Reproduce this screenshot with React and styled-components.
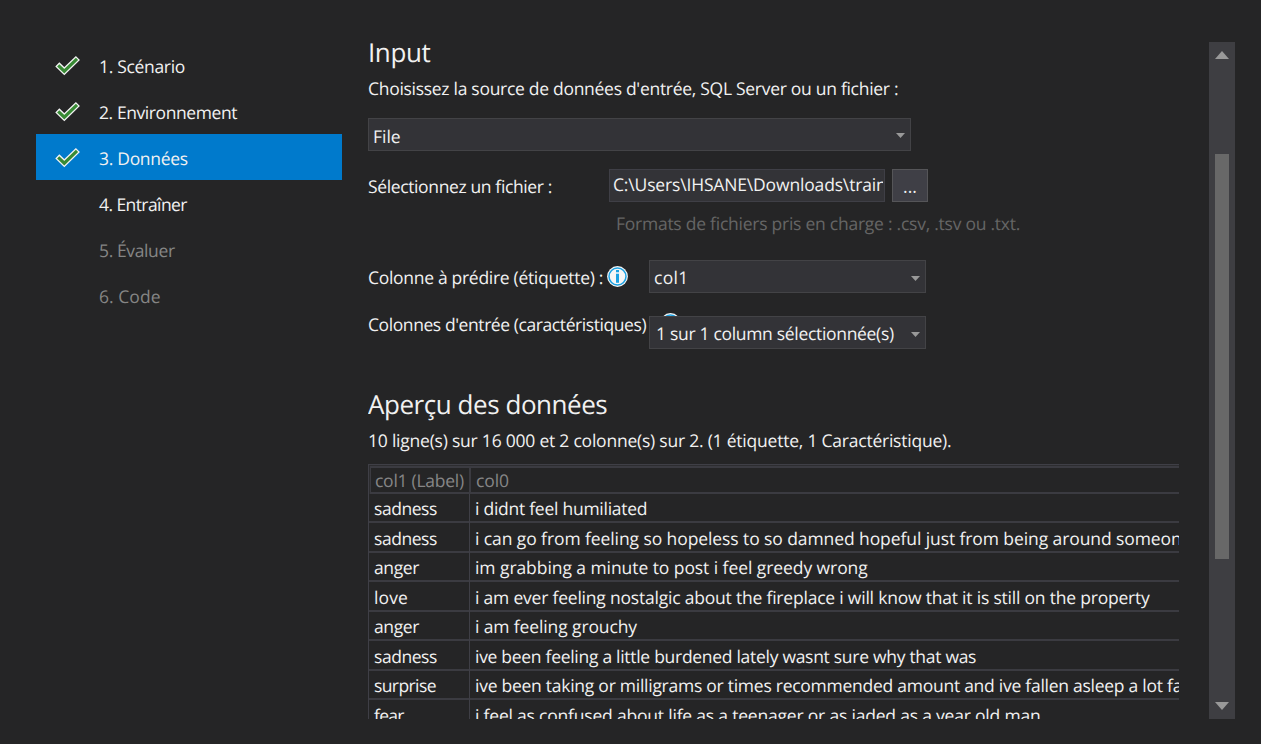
import React from "react";
import styled, { createGlobalStyle } from "styled-components";

const GlobalStyle = createGlobalStyle`
  * { box-sizing: border-box; }
  body {
    margin: 0;
    background: #252526;
    color: #f1f1f1;
    font-family: "Open Sans", "Noto Sans", sans-serif;
    font-size: 17.5px;
    text-rendering: geometricPrecision;
  }
`;

const Window = styled.div`
  display: flex;
  width: 1261px;
  height: 744px;
  padding: 34px 26px 25px 36px;
  overflow: hidden;
`;

const Steps = styled.nav`
  width: 306px;
  margin-top: 8px;
  flex: none;
`;

const Step = styled.div`
  display: flex;
  height: 46px;
  background: ${(p) => (p.$active ? "#007acc" : "transparent")};
  color: ${(p) => (p.$disabled ? "#858585" : "#f1f1f1")};
`;

const StepIcon = styled.span`
  width: 63px;
  padding: 13px 0 0 19px;
  line-height: 0;
`;

const Text = styled.span`
  white-space: pre;
  letter-spacing: ${(p) => p.$track || 0}px;
`;

const StepText = styled(Text)`
  line-height: 50px;
`;

const Content = styled.main`
  width: 811px;
  height: 685px;
  margin-left: 26px;
  overflow: hidden;
  flex: none;
`;

const Heading = styled.h2`
  margin: ${(p) => p.$top || 0}px 0 7px;
  font-size: 26px;
  font-weight: 400;
  line-height: 36px;
  letter-spacing: ${(p) => p.$track}px;
  white-space: pre;
`;

const Paragraph = styled.p`
  margin: 0;
  line-height: 24px;
  white-space: pre;
  letter-spacing: ${(p) => p.$track}px;
`;

const Hint = styled(Paragraph)`
  margin: 10px 0 24px 248px;
  color: #656565;
`;

const Select = styled.div`
  display: flex;
  position: relative;
  justify-content: space-between;
  align-items: center;
  width: ${(p) => p.$width}px;
  height: 33px;
  padding: ${(p) => p.$drop || 2}px 5px 0 ${(p) => p.$indent || 4}px;
  border: 1px solid #434346;
  background: #333337;
`;

const SourceSelect = styled(Select)`
  margin: 17px 0 18px;
`;

const SourceText = styled.span`
  padding-top: 2px;
`;

const FieldRow = styled.div`
  position: relative;
  display: grid;
  grid-template-columns: ${(p) => p.$label}px auto auto;
  justify-content: start;
  height: 33px;
  margin-bottom: ${(p) => p.$gap || 0}px;
`;

const FieldLabel = styled.label`
  display: flex;
  line-height: ${(p) => p.$line || 37}px;
`;

const TextBox = styled.div`
  width: 276px;
  height: 33px;
  padding: 0 1px 0 3px;
  border: 1px solid #3f3f46;
  background: #333337;
  line-height: 30px;
`;

const TextBoxValue = styled(Text)`
  display: block;
  overflow: hidden;
`;

const BrowseButton = styled.button`
  width: 36px;
  height: 33px;
  margin-left: 7px;
  padding: 0;
  border: 1px solid #555558;
  background: #3f3f46;
  color: #f1f1f1;
  font: inherit;
  line-height: 33px;
`;

const InfoSlot = styled.span`
  margin: 6px 0 0 4px;
  line-height: 0;
`;

const CoveredInfo = styled.span`
  position: absolute;
  left: 292px;
  top: -3px;
  line-height: 0;
`;

const Table = styled.div`
  width: 1400px;
  margin-top: 11px;
  border-top: 1px solid #3f3f46;
  border-left: 1px solid #3f3f46;
`;

const HeaderRow = styled.div`
  display: grid;
  grid-template-columns: 99px 1fr;
  height: 29px;
  padding: 1px 0 0 1px;
  background: #2d2d30;
  color: #868686;
`;

const HeaderCell = styled.div`
  height: 28px;
  padding-left: ${(p) => p.$indent}px;
  border: solid #3b3b41;
  border-width: 2px 0 2px ${(p) => p.$left}px;
  background: #252526;
  line-height: 26px;
`;

const Row = styled.div`
  display: grid;
  grid-template-columns: 101px 1fr;
  height: ${(p) => (p.$tall ? 30 : 29)}px;
  line-height: ${(p) => (p.$tall ? 32 : 31)}px;
  border-bottom: 2px solid #3b3b41;
`;

const Cell = styled.div`
  height: 100%;
  padding-left: 5px;
  border-right: 1px solid #3f3f46;
  white-space: pre;
`;

const ScrollBar = styled.div`
  display: flex;
  flex-direction: column;
  align-items: center;
  width: 26px;
  height: 677px;
  margin: 8px 0 0 30px;
  padding: 9px 0;
  background: #3e3e42;
  flex: none;
`;

const Thumb = styled.div`
  width: 14px;
  height: 405px;
  margin: 95px 0 143px;
  background: #686868;
`;

const Check = () => (
  <svg width="26" height="22" viewBox="0 0 26 22" fill="none">
    <path d="M2.3 9.4 9.3 16.2 22.9 3" stroke="#f3f3f3" strokeWidth="5.8" />
    <path d="M3.2 10.3 9.3 16.2 22 3.9" stroke="#388a34" strokeWidth="3.2" />
  </svg>
);

const Info = () => (
  <svg width="21" height="21" viewBox="0 0 21 21">
    <circle cx="10.5" cy="10.5" r="10.4" fill="#f6f6f6" />
    <circle cx="10.5" cy="10.5" r="8.5" fill="none" stroke="#1ba1e2" strokeWidth="1.5" />
    <path d="M9 4h3v2.3H9zM9 7.7h3v9H9z" fill="#1ba1e2" />
  </svg>
);

const Caret = () => (
  <svg width="9" height="5" viewBox="0 0 9 5">
    <path d="M0 0h9L4.5 5z" fill="#999" />
  </svg>
);

const ScrollArrow = ({ up }) => (
  <svg width="14" height="8" viewBox="0 0 14 8">
    <path d={up ? "M0 8h14L7 0z" : "M0 0h14L7 8z"} fill="#999" />
  </svg>
);

const steps = [
  { text: "1. Scénario", track: -0.32, done: true },
  { text: "2. Environnement", track: -0.42, done: true },
  { text: "3. Données", track: -0.3, done: true, active: true },
  { text: "4. Entraîner", track: -0.58 },
  { text: "5. Évaluer", track: -0.38, disabled: true },
  { text: "6. Code", track: 0.05, disabled: true },
];

const rows = [
  ["sadness", -0.45, "i didnt feel humiliated", -0.26],
  ["sadness", -0.45, "i can go from feeling so hopeless to so damned hopeful just from being around someone", -0.09],
  ["anger", -0.4, "im grabbing a minute to post i feel greedy wrong", -0.07],
  ["love", 0.1, "i am ever feeling nostalgic about the fireplace i will know that it is still on the property", -0.207],
  ["anger", -0.4, "i am feeling grouchy", -0.12],
  ["sadness", -0.45, "ive been feeling a little burdened lately wasnt sure why that was", -0.29],
  ["surprise", -0.6, "ive been taking or milligrams or times recommended amount and ive fallen asleep a lot faster", -0.26],
  ["fear", -0.7, "i feel as confused about life as a teenager or as jaded as a year old man", -0.2],
];

export default function App() {
  return (
    <Window>
      <GlobalStyle />
      <Steps>
        {steps.map((s) => (
          <Step key={s.text} $active={s.active} $disabled={s.disabled}>
            <StepIcon>{s.done && <Check />}</StepIcon>
            <StepText $track={s.track}>{s.text}</StepText>
          </Step>
        ))}
      </Steps>
      <Content>
        <Heading $track={-0.4}>Input</Heading>
        <Paragraph $track={-0.29}>
          Choisissez la source de données d'entrée, SQL Server ou un fichier :
        </Paragraph>
        <SourceSelect $width={543} $drop={2} $indent={4}>
          <SourceText>File</SourceText>
          <Caret />
        </SourceSelect>
        <FieldRow $label={241}>
          <FieldLabel>
            <Text $track={-0.37}>Sélectionnez un fichier :</Text>
          </FieldLabel>
          <TextBox>
            <TextBoxValue $track={-0.16}>{"C:\\Users\\IHSANE\\Downloads\\train"}</TextBoxValue>
          </TextBox>
          <BrowseButton>...</BrowseButton>
        </FieldRow>
        <Hint $track={-0.25}>Formats de fichiers pris en charge : .csv, .tsv ou .txt.</Hint>
        <FieldRow $label={281} $gap={23}>
          <FieldLabel>
            <Text $track={-0.3}>Colonne à prédire (étiquette) :</Text>
            <InfoSlot>
              <Info />
            </InfoSlot>
          </FieldLabel>
          <Select $width={277} $drop={3}>
            <Text $track={0.3}>col1</Text>
            <Caret />
          </Select>
        </FieldRow>
        <FieldRow $label={281}>
          <FieldLabel $line={19}>
            <Text $track={-0.42}>Colonnes d'entrée (caractéristiques)</Text>
            <CoveredInfo>
              <Info />
            </CoveredInfo>
          </FieldLabel>
          <Select $width={277} $drop={3} $indent={6}>
            <Text $track={-0.311}>1 sur 1 column sélectionnée(s)</Text>
            <Caret />
          </Select>
        </FieldRow>
        <Heading $top={37} $track={-0.45}>Aperçu des données</Heading>
        <Paragraph $track={-0.224}>
          10 ligne(s) sur 16 000 et 2 colonne(s) sur 2. (1 étiquette, 1 Caractéristique).
        </Paragraph>
        <Table>
          <HeaderRow>
            <HeaderCell $left={1} $indent={4}>
              <Text $track={-0.259}>col1 (Label)</Text>
            </HeaderCell>
            <HeaderCell $left={2} $indent={5}>
              <Text $track={-0.1}>col0</Text>
            </HeaderCell>
          </HeaderRow>
          {rows.map(([label, labelTrack, text, textTrack], i) => (
            <Row key={i} $tall={i % 2 === 1}>
              <Cell>
                <Text $track={labelTrack}>{label}</Text>
              </Cell>
              <Cell>
                <Text $track={textTrack}>{text}</Text>
              </Cell>
            </Row>
          ))}
        </Table>
      </Content>
      <ScrollBar>
        <ScrollArrow up />
        <Thumb />
        <ScrollArrow />
      </ScrollBar>
    </Window>
  );
}
